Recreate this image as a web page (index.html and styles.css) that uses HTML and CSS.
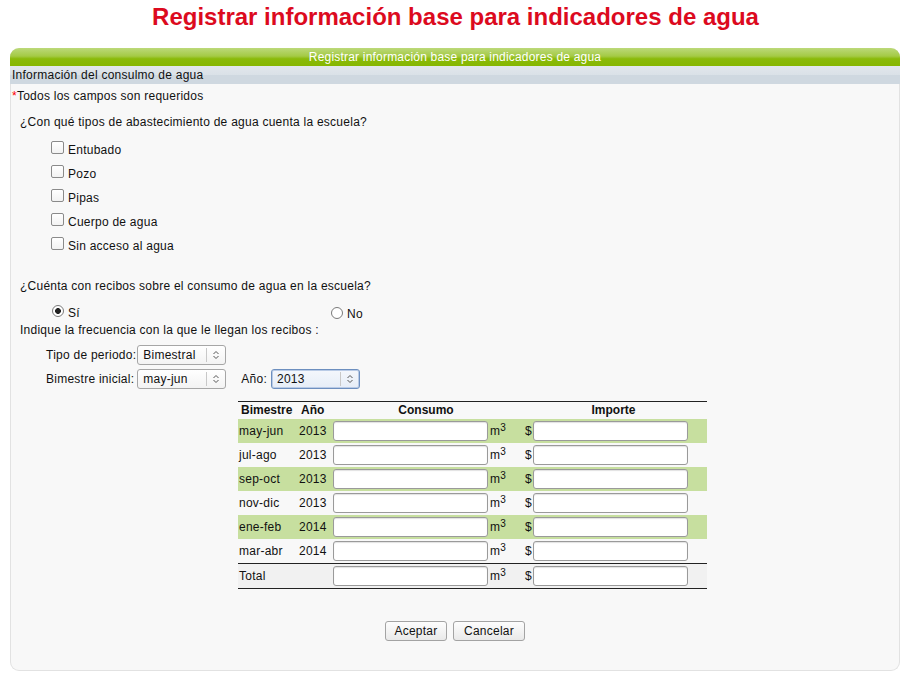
FILE: index.html
```html
<!DOCTYPE html>
<html lang="es">
<head>
<meta charset="utf-8">
<title>Registrar información base para indicadores de agua</title>
<link rel="stylesheet" href="styles.css">
</head>
<body>
<h1 class="title">Registrar información base para indicadores de agua</h1>
<div class="panel">
  <div class="bar">Registrar información base para indicadores de agua</div>
  <div class="sub">Información del consulmo de agua</div>
  <div class="req"><span class="ast">*</span>Todos los campos son requeridos</div>
  <div class="q q1">¿Con qué tipos de abastecimiento de agua cuenta la escuela?</div>
  <div class="checks">
    <label class="chk"><input type="checkbox"> Entubado</label>
    <label class="chk"><input type="checkbox"> Pozo</label>
    <label class="chk"><input type="checkbox"> Pipas</label>
    <label class="chk"><input type="checkbox"> Cuerpo de agua</label>
    <label class="chk"><input type="checkbox"> Sin acceso al agua</label>
  </div>
  <div class="q q2">¿Cuénta con recibos sobre el consumo de agua en la escuela?</div>
  <div class="radios">
    <label class="rad rad-si"><input type="radio" name="r" checked> Sí</label>
    <label class="rad rad-no"><input type="radio" name="r"> No</label>
  </div>
  <div class="q q3">Indique la frecuencia con la que le llegan los recibos :</div>
  <div class="frow frow1">
    <span>Tipo de periodo:</span>
    <span class="sel"><select><option>Bimestral</option></select><span class="arr"><svg width="8" height="10" viewBox="0 0 8 10"><path d="M1.5 4 L4 1.5 L6.5 4 M1.5 6 L4 8.5 L6.5 6" fill="none" stroke="#555" stroke-width="1"/></svg></span></span>
  </div>
  <div class="frow frow2">
    <span>Bimestre inicial:</span>
    <span class="sel sel-b"><select><option>may-jun</option></select><span class="arr"><svg width="8" height="10" viewBox="0 0 8 10"><path d="M1.5 4 L4 1.5 L6.5 4 M1.5 6 L4 8.5 L6.5 6" fill="none" stroke="#555" stroke-width="1"/></svg></span></span>
    <span class="anio">Año:</span>
    <span class="sel focus"><select><option>2013</option></select><span class="arr"><svg width="8" height="10" viewBox="0 0 8 10"><path d="M1.5 4 L4 1.5 L6.5 4 M1.5 6 L4 8.5 L6.5 6" fill="none" stroke="#555" stroke-width="1"/></svg></span></span>
  </div>
  <table class="grid">
    <colgroup>
      <col class="c1"><col class="c2"><col class="c3"><col class="c4"><col class="c5"><col class="c6"><col class="c7">
    </colgroup>
    <thead>
      <tr><th class="l">Bimestre</th><th class="l">Año</th><th colspan="2">Consumo</th><th colspan="3">Importe</th></tr>
    </thead>
    <tbody>
      <tr class="g"><td>may-jun</td><td>2013</td><td class="i"><input type="text"></td><td>m<sup>3</sup></td><td class="d">$</td><td class="i"><input type="text"></td><td></td></tr>
      <tr><td>jul-ago</td><td>2013</td><td class="i"><input type="text"></td><td>m<sup>3</sup></td><td class="d">$</td><td class="i"><input type="text"></td><td></td></tr>
      <tr class="g"><td>sep-oct</td><td>2013</td><td class="i"><input type="text"></td><td>m<sup>3</sup></td><td class="d">$</td><td class="i"><input type="text"></td><td></td></tr>
      <tr><td>nov-dic</td><td>2013</td><td class="i"><input type="text"></td><td>m<sup>3</sup></td><td class="d">$</td><td class="i"><input type="text"></td><td></td></tr>
      <tr class="g"><td>ene-feb</td><td>2014</td><td class="i"><input type="text"></td><td>m<sup>3</sup></td><td class="d">$</td><td class="i"><input type="text"></td><td></td></tr>
      <tr><td>mar-abr</td><td>2014</td><td class="i"><input type="text"></td><td>m<sup>3</sup></td><td class="d">$</td><td class="i"><input type="text"></td><td></td></tr>
    </tbody>
    <tfoot>
      <tr><td>Total</td><td></td><td class="i"><input type="text"></td><td>m<sup>3</sup></td><td class="d">$</td><td class="i"><input type="text"></td><td></td></tr>
    </tfoot>
  </table>
  <div class="btns">
    <button type="button" class="btn b1">Aceptar</button>
    <button type="button" class="btn b2">Cancelar</button>
  </div>
</div>
</body>
</html>
```
FILE: styles.css
```css
html, body { margin: 0; padding: 0; background: #fff; }
body { font-family: "Liberation Sans", Arial, sans-serif; font-size: 12px; color: #111; letter-spacing: 0.25px; }

.title {
  margin: 0;
  height: 48px;
  padding-top: 2px;
  box-sizing: border-box;
  text-align: center;
  color: #dc0a1e;
  font-size: 24px;
  font-weight: bold;
  line-height: 30px;
  letter-spacing: 0;
}

.panel {
  margin: 0 11px 0 10px;
  height: 623px;
  box-sizing: border-box;
  background: #f8f8f8;
  border: 1px solid #e2e2e2;
  border-top: none;
  border-radius: 9px;
}

.bar {
  height: 18px;
  margin: 0 -1px;
  border-radius: 9px 9px 0 0;
  background: linear-gradient(#bcd97a 0%, #a4ca45 45%, #8aba0a 60%, #86b700 100%);
  color: #fff;
  text-align: center;
  line-height: 18px;
  font-size: 12px;
  letter-spacing: 0.2px;
}

.sub {
  height: 18px;
  margin: 0 -1px;
  padding-left: 2px;
  background: linear-gradient(#e2e7ec 0%, #dae1e7 50%, #cfd8e0 51%, #cfd8e0 100%);
  line-height: 18px;
  color: #111;
}

.req { height: 24px; line-height: 24px; padding-left: 1px; }
.ast { color: #ff0000; }

.q { padding-left: 9px; height: 24px; line-height: 24px; }
.q1 { margin-top: 2px; }
.q2 { margin-top: 17px; }
.q3 { height: 18px; line-height: 18px; }

.checks { margin-top: 3px; padding-left: 40px; display: flex; flex-direction: column; }
.chk { display: flex; align-items: center; height: 24px; gap: 4px; padding-top: 1px; box-sizing: border-box; }

input[type=checkbox] {
  appearance: none;
  -webkit-appearance: none;
  margin: -4px 0 0 0;
  width: 13px; height: 13px;
  border: 1px solid #8a8a8a;
  border-radius: 2px;
  background: linear-gradient(#fff, #f2f2f2);
  box-sizing: border-box;
}

.radios { display: flex; height: 18px; margin-top: 5px; padding-left: 41px; }
.rad { display: flex; align-items: center; gap: 4px; }
.rad-si { width: 279px; margin-top: 1px; }
.rad-no { margin-top: 4px; }
input[type=radio] {
  appearance: none;
  -webkit-appearance: none;
  margin: -3px 0 0 0;
  width: 12px; height: 12px;
  border: 1px solid #7a7a7a;
  border-radius: 50%;
  background: #fff;
  box-sizing: border-box;
}
input[type=radio]:checked {
  background: radial-gradient(circle, #222 0 2.6px, #fff 3.2px);
}

.frow { display: flex; align-items: center; height: 20px; padding-left: 35px; }
.frow1 { margin-top: 6px; }
.frow2 { margin-top: 4px; }
.frow1 .sel { margin-left: 1px; }
.frow2 .sel-b { margin-left: 3px; }
.anio { margin-left: 15px; margin-right: 4px; }

.sel { position: relative; display: inline-block; width: 89px; height: 20px; }
.sel select {
  appearance: none;
  -webkit-appearance: none;
  width: 100%; height: 100%;
  margin: 0;
  box-sizing: border-box;
  border: 1px solid #a6a6a6;
  border-radius: 3px;
  background: linear-gradient(#ffffff, #f3f3f3);
  font-family: "Liberation Sans", Arial, sans-serif;
  font-size: 12px;
  letter-spacing: 0.25px;
  color: #111;
  padding: 0 0 0 5px;
  line-height: 18px;
}
.sel .arr {
  position: absolute;
  right: 1px; top: 3px;
  width: 18px; height: 14px;
  border-left: 1px solid #c8c8c8;
  display: flex; align-items: center; justify-content: center;
  pointer-events: none;
}
.sel.focus select {
  border-color: #6d8fbf;
  background: linear-gradient(#f4f7fc, #e6edf7);
  box-shadow: 0 0 0 1px #b9cbe6 inset;
}

.grid {
  margin: 12px 0 0 227px;
  border-collapse: collapse;
  width: 469px;
  table-layout: fixed;
  border-top: 1px solid #222;
  border-bottom: 1px solid #222;
}
.c1 { width: 60px; } .c2 { width: 34px; } .c3 { width: 157px; } .c4 { width: 31px; }
.c5 { width: 13px; } .c6 { width: 157px; } .c7 { width: 17px; }
.grid th { height: 17px; padding: 0; font-weight: bold; font-size: 12px; text-align: center; line-height: 17px; letter-spacing: 0; }
.grid th.l { text-align: left; padding-left: 3px; }
.grid td { height: 24px; padding: 0 0 0 1px; white-space: nowrap; }
.grid td.i { padding: 0; }
.grid td.i:nth-child(3) { padding-left: 1px; }
.grid tr.g td { background: #c7df9f; }
.grid td.d { text-align: right; padding: 0 1px 0 0; }
.grid tfoot td { background: #f1f1f1; border-top: 1px solid #222; height: 24px; }
.grid sup { font-size: 10px; vertical-align: 4px; line-height: 0; }
.grid input {
  display: block;
  width: 155px; height: 20px;
  margin: 0;
  box-sizing: border-box;
  border: 1px solid #9a9a9a;
  border-radius: 3px;
  background: #fff;
  box-shadow: inset 0 1px 1px rgba(0,0,0,0.12);
}

.btns { display: flex; justify-content: center; gap: 6px; margin-top: 32px; }
.btn {
  height: 20px;
  margin: 0;
  padding: 0 8px;
  border: 1px solid #a3a3a3;
  border-radius: 3px;
  background: linear-gradient(#fdfdfd, #e9e9e9);
  font-family: "Liberation Sans", Arial, sans-serif;
  font-size: 12px;
  letter-spacing: 0.25px;
  color: #111;
  line-height: 17px;
}
.b1 { width: 62px; }
.b2 { width: 72px; }
```
